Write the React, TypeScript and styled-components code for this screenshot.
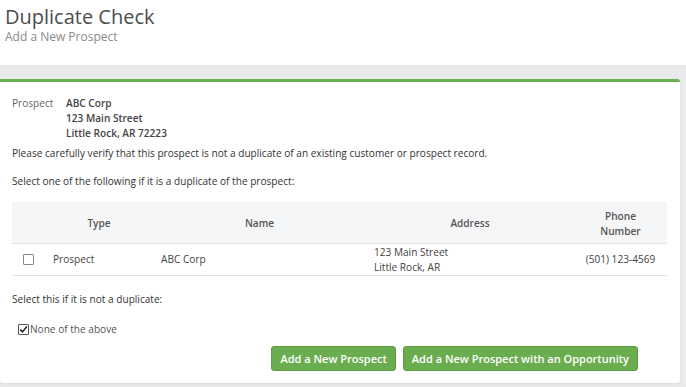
import styled, { createGlobalStyle } from "styled-components";

const GlobalStyle = createGlobalStyle`
  html, body {
    margin: 0;
    padding: 0;
    background: #ffffff;
    font-family: "Open Sans", "Liberation Sans", Arial, sans-serif;
  }
`;

const Page = styled.div`
  display: flex;
  flex-direction: column;
  min-height: 387px;
  background: #ffffff;
`;

const Header = styled.header`
  height: 65px;
  padding: 4px 0 0 5px;
  box-sizing: border-box;
`;

const Title = styled.h1`
  margin: 0;
  font-size: 20px;
  line-height: 26px;
  font-weight: 400;
  color: #4d4d4d;
`;

const Subtitle = styled.div`
  font-size: 12px;
  line-height: 14px;
  color: #8a8a8a;
`;

const Main = styled.main`
  flex: 1;
  background: #e9eaec;
  padding: 14px 6px 5px 0;
`;

const Card = styled.section`
  background: #ffffff;
  border-top: 3px solid #6ab04c;
  border-radius: 0 3px 3px 3px;
  box-shadow: 0 1px 2px rgba(0, 0, 0, 0.08);
  padding: 14px 13px 12px 12px;
  font-size: 10.1px;
  line-height: 15px;
  color: #333333;
`;

const ProspectBlock = styled.div`
  display: flex;
  gap: 12px;
`;

const Label = styled.div`
  width: 42px;
  color: #666666;
`;

const Values = styled.div`
  font-weight: 600;
  color: #444444;
`;

const Paragraph = styled.p<{ $top: number }>`
  margin: ${({ $top }) => $top}px 0 0 0;
`;

const Table = styled.table`
  width: 100%;
  margin-top: 13px;
  border-collapse: collapse;
  table-layout: fixed;
`;

const HeadCell = styled.th<{ $width: number }>`
  box-sizing: border-box;
  width: ${({ $width }) => $width}px;
  background: #f5f6f7;
  height: 41px;
  padding: 3px 8px 0;
  font-weight: 600;
  color: #555555;
  text-align: center;
  border-bottom: 1px solid #e4e4e4;
`;

const Cell = styled.td<{ $center?: boolean }>`
  box-sizing: border-box;
  height: 30px;
  padding: 1px 8px 0;
  color: #444444;
  text-align: ${({ $center }) => ($center ? "center" : "left")};
  border-bottom: 1px solid #e4e4e4;
  vertical-align: middle;
`;

const Box = styled.span<{ $checked?: boolean }>`
  display: inline-flex;
  align-items: center;
  justify-content: center;
  width: 9px;
  height: 9px;
  border: 1px solid ${({ $checked }) => ($checked ? "#555555" : "#888888")};
  background: #ffffff;
  border-radius: 1px;
  flex-shrink: 0;
`;

const BoxCell = styled.div`
  display: flex;
  padding-left: 3px;
`;

const CheckRow = styled.label`
  display: flex;
  align-items: center;
  gap: 1px;
  margin: 15px 0 0 6px;
  color: #555555;
`;

const ButtonRow = styled.div`
  display: flex;
  justify-content: flex-end;
  gap: 7px;
  margin-top: 9px;
  padding-right: 29px;
`;

const Button = styled.button`
  height: 25px;
  padding: 0 8px;
  background: #6aad4f;
  border: 1px solid #5d9d44;
  border-radius: 3px;
  color: #ffffff;
  font-family: "Open Sans", "Liberation Sans", Arial, sans-serif;
  font-size: 11px;
  font-weight: 600;
  cursor: pointer;
`;

function CheckMark() {
  return (
    <svg width="9" height="9" viewBox="0 0 9 9">
      <path d="M1.3 4.6 L3.5 6.9 L7.8 1.6" fill="none" stroke="#222" strokeWidth="1.6" />
    </svg>
  );
}

export default function App() {
  return (
    <Page>
      <GlobalStyle />
      <Header>
        <Title>Duplicate Check</Title>
        <Subtitle>Add a New Prospect</Subtitle>
      </Header>
      <Main>
        <Card>
          <ProspectBlock>
            <Label>Prospect</Label>
            <Values>
              <div>ABC Corp</div>
              <div>123 Main Street</div>
              <div>Little Rock, AR 72223</div>
            </Values>
          </ProspectBlock>
          <Paragraph $top={5}>
            Please carefully verify that this prospect is not a duplicate of an existing customer or prospect record.
          </Paragraph>
          <Paragraph $top={13}>Select one of the following if it is a duplicate of the prospect:</Paragraph>
          <Table>
            <thead>
              <tr>
                <HeadCell $width={33} />
                <HeadCell $width={108}>Type</HeadCell>
                <HeadCell $width={213}>Name</HeadCell>
                <HeadCell $width={208}>Address</HeadCell>
                <HeadCell $width={93}>
                  Phone
                  <br />
                  Number
                </HeadCell>
              </tr>
            </thead>
            <tbody>
              <tr>
                <Cell>
                  <BoxCell>
                    <Box />
                  </BoxCell>
                </Cell>
                <Cell>Prospect</Cell>
                <Cell>ABC Corp</Cell>
                <Cell>
                  123 Main Street
                  <br />
                  Little Rock, AR
                </Cell>
                <Cell $center>(501) 123-4569</Cell>
              </tr>
            </tbody>
          </Table>
          <Paragraph $top={16}>Select this if it is not a duplicate:</Paragraph>
          <CheckRow>
            <Box $checked>
              <CheckMark />
            </Box>
            None of the above
          </CheckRow>
          <ButtonRow>
            <Button>Add a New Prospect</Button>
            <Button>Add a New Prospect with an Opportunity</Button>
          </ButtonRow>
        </Card>
      </Main>
    </Page>
  );
}
